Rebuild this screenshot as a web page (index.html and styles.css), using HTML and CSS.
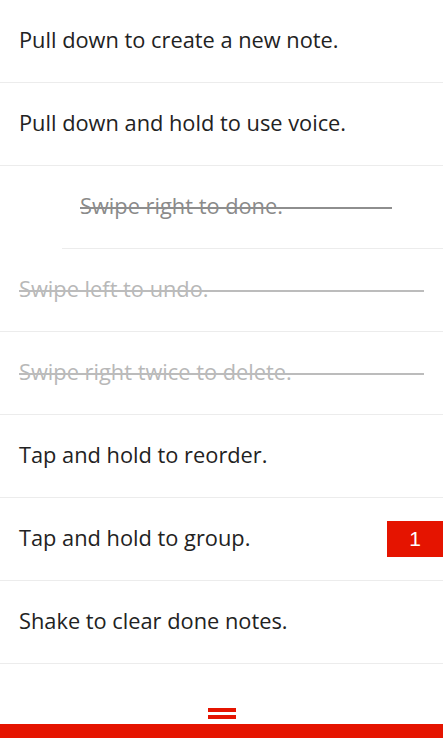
FILE: index.html
```html
<!DOCTYPE html>
<html lang="en">
<head>
  <meta charset="UTF-8">
  <meta name="viewport" content="width=device-width, initial-scale=1.0">
  <title>Notes</title>
  <link rel="stylesheet" href="styles.css">
</head>
<body>
  <div class="app">
    <ul class="notes">
      <li class="note"><span class="note-text">Pull down to create a new note.</span></li>
      <li class="note"><span class="note-text">Pull down and hold to use voice.</span></li>
      <li class="note swiping done">
        <span class="note-text">Swipe right to done.</span>
        <span class="strike strike-partial"></span>
      </li>
      <li class="note done faded">
        <span class="note-text">Swipe left to undo.</span>
        <span class="strike"></span>
      </li>
      <li class="note done faded">
        <span class="note-text">Swipe right twice to delete.</span>
        <span class="strike"></span>
      </li>
      <li class="note"><span class="note-text">Tap and hold to reorder.</span></li>
      <li class="note">
        <span class="note-text">Tap and hold to group.</span>
        <span class="badge">1</span>
      </li>
      <li class="note"><span class="note-text">Shake to clear done notes.</span></li>
    </ul>

    <div class="footer">
      <div class="handle">
        <span class="handle-bar"></span>
        <span class="handle-bar"></span>
      </div>
      <div class="footer-bar"></div>
    </div>
  </div>
</body>
</html>
```

FILE: styles.css
```css
html, body {
  margin: 0;
  padding: 0;
  background-color: #ffffff;
}
body {
  font-family: "Open Sans", "Noto Sans", sans-serif;
  color: #222222;
}
.app {
  display: flex;
  flex-direction: column;
  height: 738px;
  overflow: hidden;
}
.notes {
  list-style: none;
  margin: 0;
  padding: 0;
}
.note {
  position: relative;
  display: flex;
  align-items: center;
  box-sizing: border-box;
  height: 83px;
  padding-left: 19px;
  padding-bottom: 3px;
  border-bottom: 1px solid #ececec;
  font-size: 21.8px;
}
.note-text {
  white-space: nowrap;
}
.note.swiping {
  margin-left: 62px;
  padding-left: 18px;
}
.note.done {
  color: #8a8a8a;
}
.note.done.faded {
  color: #b8b8b8;
}
.strike {
  position: absolute;
  left: 19px;
  right: 19px;
  top: 41px;
  height: 2px;
  background-color: #bcbcbc;
}
.strike-partial {
  left: 18px;
  right: auto;
  width: 312px;
  background-color: #8e8e8e;
}
.badge {
  margin-left: auto;
  margin-top: 2px;
  width: 56px;
  height: 36px;
  display: flex;
  align-items: center;
  justify-content: center;
  background-color: #e51400;
  color: #ffffff;
  font-family: "Liberation Sans", sans-serif;
  font-size: 21px;
}
.footer {
  margin-top: auto;
  display: flex;
  flex-direction: column;
  align-items: center;
}
.handle {
  display: flex;
  flex-direction: column;
  gap: 3px;
  margin-bottom: 5px;
}
.handle-bar {
  display: block;
  width: 28px;
  height: 4px;
  background-color: #e51400;
}
.footer-bar {
  align-self: stretch;
  height: 14px;
  background-color: #e51400;
}
```
